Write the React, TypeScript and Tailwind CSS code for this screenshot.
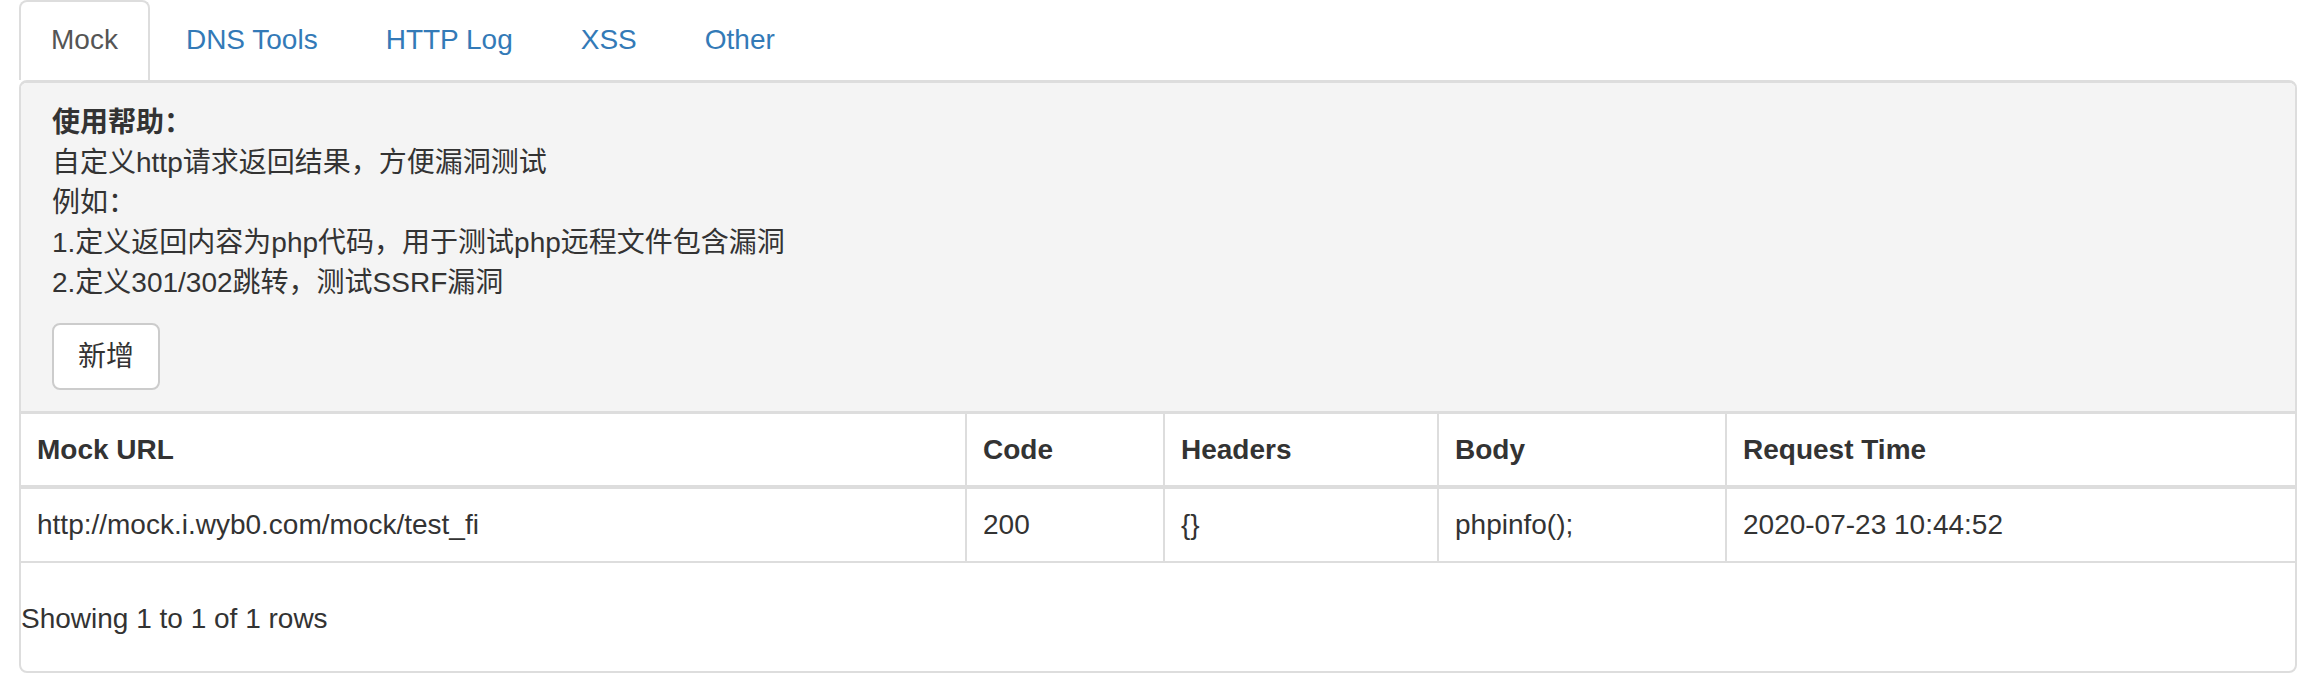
const tabs = ['Mock', 'DNS Tools', 'HTTP Log', 'XSS', 'Other']

const columns = [
  { title: 'Mock URL', width: 'w-[944px]' },
  { title: 'Code', width: 'w-[198px]' },
  { title: 'Headers', width: 'w-[274px]' },
  { title: 'Body', width: 'w-[288px]' },
  { title: 'Request Time', width: '' },
]

const rows = [
  ['http://mock.i.wyb0.com/mock/test_fi', '200', '{}', 'phpinfo();', '2020-07-23 10:44:52'],
]

export default function App() {
  return (
    <div className="min-h-[692px] bg-white px-[19px] font-[Liberation_Sans,Noto_Sans_CJK_SC,sans-serif] text-[28px] leading-[40px] text-[#333]">
      {/* tabs */}
      <ul className="flex h-[80px]">
        {tabs.map((tab, i) => (
          <li key={tab} className="mr-[4px]">
            {i === 0 ? (
              <span className="block h-[80px] rounded-t-[8px] border-2 border-b-0 border-[#ddd] bg-white px-[30px] pt-[18px] text-[#555]">
                {tab}
              </span>
            ) : (
              <a href="#" className="block h-[80px] border-2 border-b-0 border-transparent px-[30px] pt-[18px] text-[#337ab7]">
                {tab}
              </a>
            )}
          </li>
        ))}
      </ul>

      <div className="overflow-hidden rounded-[8px] border-2 border-t-[3px] border-[#ddd]">
        {/* help */}
        <div className="border-b-[3px] border-[#ddd] bg-[#f4f4f4] pb-[21px] pl-[31px] pt-[20px]">
          <p className="font-bold">使用帮助：</p>
          <p>自定义http请求返回结果，方便漏洞测试</p>
          <p>例如：</p>
          <p>1.定义返回内容为php代码，用于测试php远程文件包含漏洞</p>
          <p>2.定义301/302跳转，测试SSRF漏洞</p>
          <button className="mt-[20px] h-[67px] rounded-[8px] border-2 border-[#ccc] bg-white px-[24px] text-[#333]">
            新增
          </button>
        </div>

        {/* table */}
        <table className="w-full table-fixed border-separate border-spacing-0">
          <thead>
            <tr>
              {columns.map((c, i) => (
                <th
                  key={c.title}
                  className={`${c.width} border-b-4 border-[#ddd] pb-[15px] pl-[16px] pt-[16px] text-left font-bold ${i > 0 ? 'border-l-2' : ''}`}
                >
                  {c.title}
                </th>
              ))}
            </tr>
          </thead>
          <tbody>
            {rows.map((r) => (
              <tr key={r[0]}>
                {r.map((cell, i) => (
                  <td
                    key={i}
                    className={`border-b-2 border-[#ddd] py-[16px] pl-[16px] ${i > 0 ? 'border-l-2' : ''}`}
                  >
                    {cell}
                  </td>
                ))}
              </tr>
            ))}
          </tbody>
        </table>

        <div className="pb-[32px] pt-[36px]">Showing 1 to 1 of 1 rows</div>
      </div>
    </div>
  )
}
